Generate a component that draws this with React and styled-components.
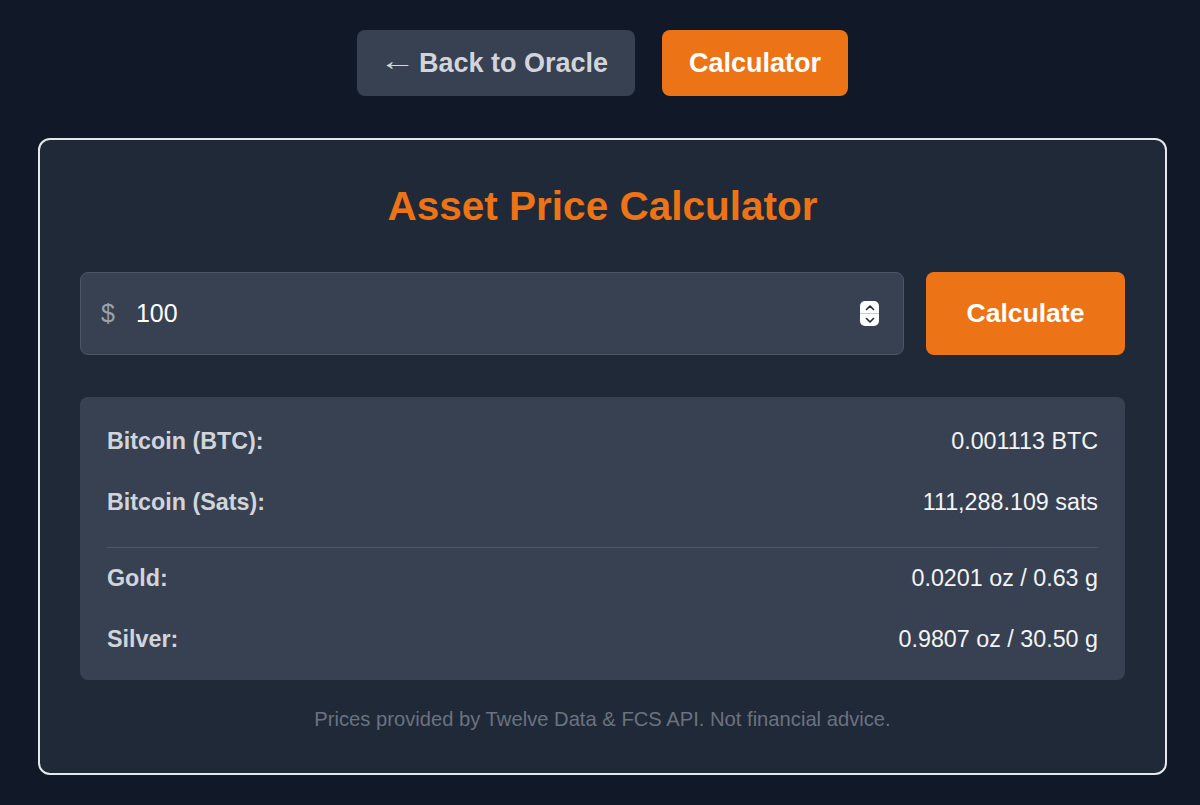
import React, { useState } from "react";
import styled, { createGlobalStyle } from "styled-components";

const Global = createGlobalStyle`
  html, body { margin: 0; padding: 0; background: #111827; }
  body { font-family: "Liberation Sans", Arial, Helvetica, sans-serif; }
  * { box-sizing: border-box; }
`;

const Page = styled.div`
  min-height: 805px;
  background: #111827;
  padding: 30px 33px 0 38px;
`;

const Nav = styled.nav`
  display: flex;
  justify-content: center;
  gap: 27px;
  margin-bottom: 42px;
`;

const NavButton = styled.button`
  height: 66px;
  padding: 0 27px;
  border: none;
  border-radius: 8px;
  font-family: inherit;
  font-size: 27px;
  font-weight: 700;
  cursor: pointer;
  display: flex;
  align-items: center;
  gap: 9px;
  background: ${(p) => (p.$active ? "#ec7316" : "#374151")};
  color: ${(p) => (p.$active ? "#ffffff" : "#d1d5db")};
`;

const Arrow = styled.span`
  display: inline-block;
  width: 26px;
  font-family: "Liberation Sans", sans-serif;
  font-weight: 400;
  font-size: 27px;
  line-height: 1;
  transform: translate(-5px, -2px) scaleX(1.35);
  transform-origin: left center;
`;

const Card = styled.section`
  width: 1129px;
  border: 2px solid #e5e7eb;
  border-radius: 12px;
  background: #1f2937;
  padding: 42px 40px 42px;
`;

const Title = styled.h1`
  margin: 0 0 42px;
  text-align: center;
  font-size: 40.5px;
  line-height: 48px;
  font-weight: 700;
  color: #ec7316;
`;

const InputRow = styled.div`
  display: flex;
  gap: 22px;
  margin-bottom: 42px;
`;

const InputBox = styled.label`
  flex: 1;
  height: 83px;
  display: flex;
  align-items: center;
  padding: 0 24px 0 20px;
  background: #374151;
  border: 1px solid #4b5563;
  border-radius: 8px;
`;

const Currency = styled.span`
  font-size: 25px;
  color: #9ca3af;
  margin-right: 21px;
`;

const AmountInput = styled.input`
  flex: 1;
  min-width: 0;
  border: none;
  outline: none;
  background: transparent;
  color: #ffffff;
  font-family: inherit;
  font-size: 25px;
  padding: 0;
`;

const Spinner = styled.span`
  display: flex;
  flex-direction: column;
  width: 19px;
  height: 25px;
  border-radius: 5px;
  background: #ffffff;
  overflow: hidden;
`;

const SpinHalf = styled.span`
  flex: 1;
  display: flex;
  align-items: center;
  justify-content: center;
  border-top: ${(p) => (p.$bottom ? "1px solid #c8ccd2" : "none")};
`;

const CalcButton = styled.button`
  width: 199px;
  height: 83px;
  border: none;
  border-radius: 8px;
  background: #ec7316;
  color: #ffffff;
  font-family: inherit;
  font-size: 26.5px;
  font-weight: 700;
  cursor: pointer;
`;

const Results = styled.div`
  background: #374151;
  border-radius: 8px;
  padding: 14px 27px 10px;
`;

const Row = styled.div`
  display: flex;
  justify-content: space-between;
  align-items: center;
  padding: 17px 0;
  font-size: 23.3px;
  line-height: 27px;
`;

const Label = styled.span`
  font-weight: 700;
  color: #d1d5db;
`;

const Value = styled.span`
  color: #f3f4f6;
`;

const Divider = styled.hr`
  margin: 14px 0 0;
  border: none;
  height: 1px;
  background: #4b5563;
`;

const Footnote = styled.p`
  margin: 27px 0 0;
  text-align: center;
  font-size: 20.2px;
  line-height: 24px;
  color: #6b7280;
`;

const Chevron = ({ up }) => (
  <svg width="10" height="7" viewBox="0 0 10 7">
    <path
      d={up ? "M1.5 5.5 L5 2 L8.5 5.5" : "M1.5 1.5 L5 5 L8.5 1.5"}
      fill="none"
      stroke="#1f2937"
      strokeWidth="1.6"
      strokeLinecap="round"
      strokeLinejoin="round"
    />
  </svg>
);

const rows = [
  ["Bitcoin (BTC):", "0.001113 BTC"],
  ["Bitcoin (Sats):", "111,288.109 sats"],
];
const metals = [
  ["Gold:", "0.0201 oz / 0.63 g"],
  ["Silver:", "0.9807 oz / 30.50 g"],
];

export default function App() {
  const [amount, setAmount] = useState("100");
  return (
    <Page>
      <Global />
      <Nav>
        <NavButton>
          <Arrow>←</Arrow>
          <span>Back to Oracle</span>
        </NavButton>
        <NavButton $active>Calculator</NavButton>
      </Nav>
      <Card>
        <Title>Asset Price Calculator</Title>
        <InputRow>
          <InputBox>
            <Currency>$</Currency>
            <AmountInput
              type="text"
              value={amount}
              onChange={(e) => setAmount(e.target.value)}
            />
            <Spinner>
              <SpinHalf>
                <Chevron up />
              </SpinHalf>
              <SpinHalf $bottom>
                <Chevron />
              </SpinHalf>
            </Spinner>
          </InputBox>
          <CalcButton>Calculate</CalcButton>
        </InputRow>
        <Results>
          {rows.map(([l, v]) => (
            <Row key={l}>
              <Label>{l}</Label>
              <Value>{v}</Value>
            </Row>
          ))}
          <Divider />
          {metals.map(([l, v]) => (
            <Row key={l}>
              <Label>{l}</Label>
              <Value>{v}</Value>
            </Row>
          ))}
        </Results>
        <Footnote>
          Prices provided by Twelve Data &amp; FCS API. Not financial advice.
        </Footnote>
      </Card>
    </Page>
  );
}
